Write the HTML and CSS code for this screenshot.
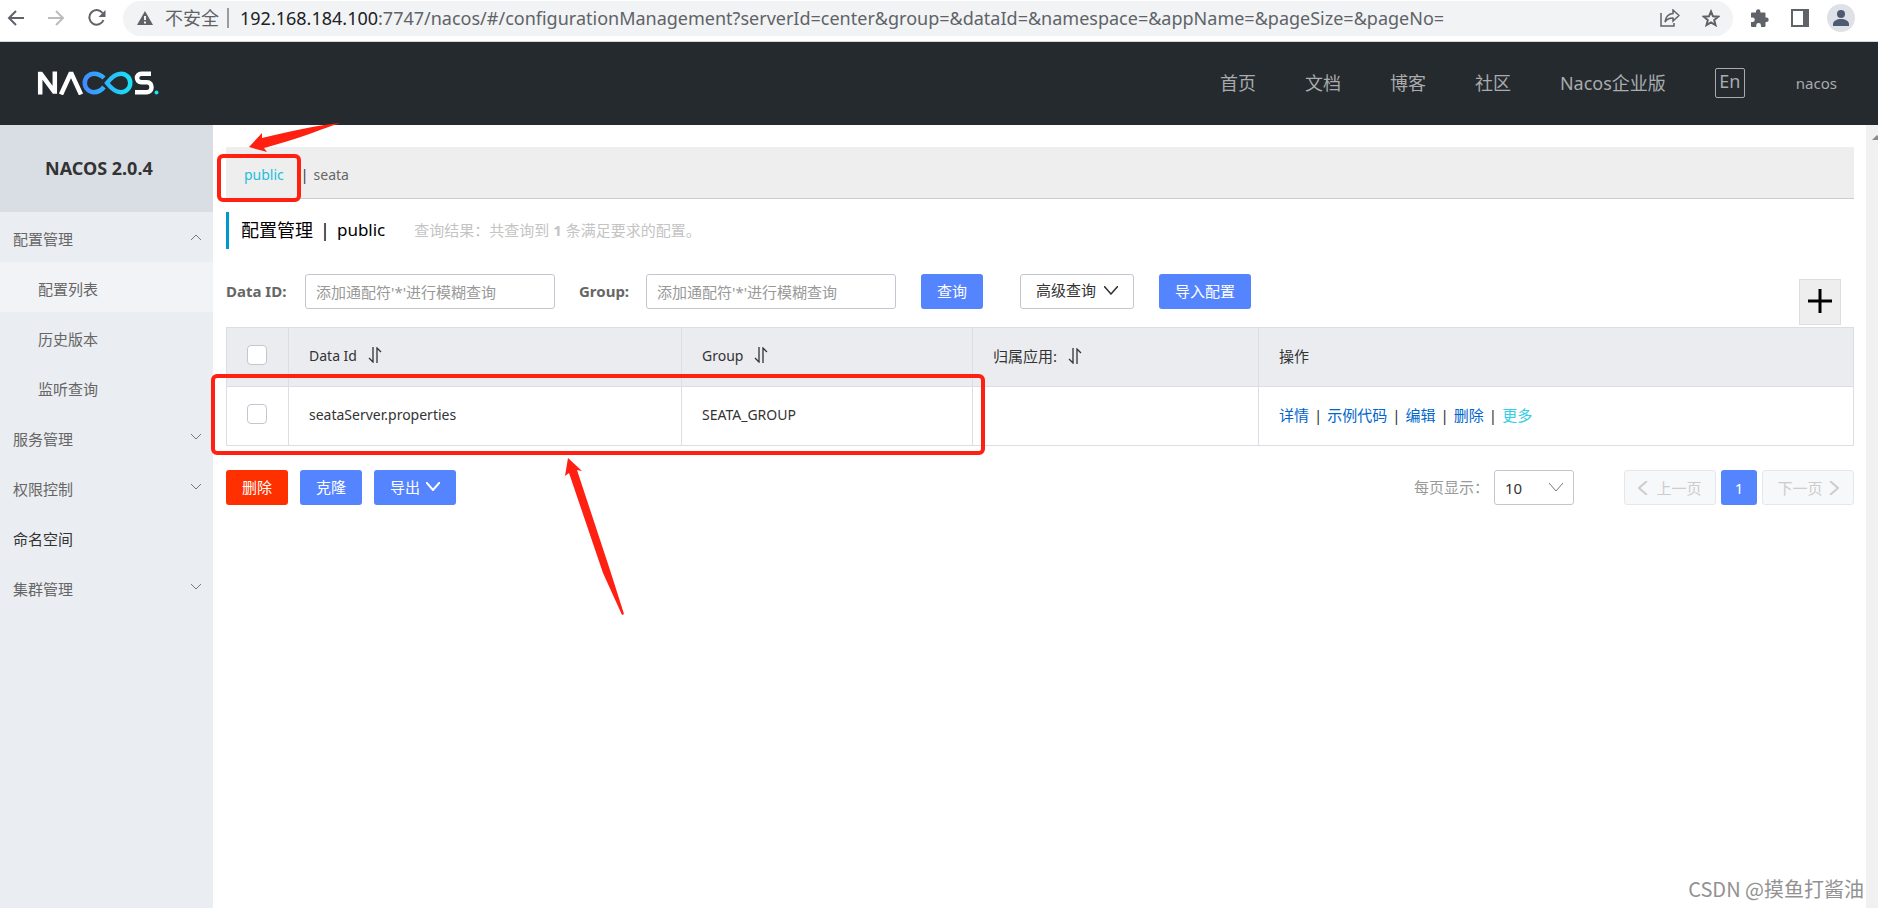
FILE: index.html
```html
<!DOCTYPE html>
<html lang="zh-CN">
<head>
<meta charset="utf-8">
<title>Nacos</title>
<link rel="stylesheet" href="styles.css">
</head>
<body>
<div class="browser-bar">
  <button class="icon-btn" aria-label="后退"><svg width="18" height="18" viewBox="0 0 18 18" fill="none" stroke="#5f6368" stroke-width="2"><path d="M17 9H2M9 2L2 9l7 7"/></svg></button>
  <button class="icon-btn" aria-label="前进"><svg width="18" height="18" viewBox="0 0 18 18" fill="none" stroke="#babcbe" stroke-width="2"><path d="M1 9h15M9 2l7 7-7 7"/></svg></button>
  <button class="icon-btn" aria-label="刷新"><svg width="20" height="18" viewBox="0 0 20 18" fill="none" stroke="#5f6368" stroke-width="2"><path d="M15.500 4A7.300 7.300 0 1 0 16.500 11"/><path d="M18.500 1v7h-7z" fill="#5f6368" stroke="none"/></svg></button>
  <div class="omnibox">
    <svg class="warn" width="16" height="14" viewBox="0 0 16 14"><path d="M8 0l8 14H0z" fill="#5f6368"/><path d="M8 5v4M8 10.500v2" stroke="#f1f3f4" stroke-width="2"/></svg>
    <span class="insecure">不安全</span>
    <span class="url"><b>192.168.184.100</b>:7747/nacos/#/configurationManagement?serverId=center&amp;group=&amp;dataId=&amp;namespace=&amp;appName=&amp;pageSize=&amp;pageNo=</span>
    <button class="icon-btn" aria-label="分享"><svg width="20" height="18" viewBox="0 0 20 18" fill="none" stroke="#5f6368" stroke-width="1.500"><path d="M1 4v13h13v-3"/><path d="M13 1l6 5.500-6 5.500V9C9 9 6.500 10.500 5 13c.5-4.500 3-8 8-8.500z"/></svg></button>
    <button class="icon-btn" aria-label="收藏"><svg width="18" height="18" viewBox="0 0 18 18" fill="none" stroke="#5f6368" stroke-width="2"><path d="M9 2.500l2 4.800 5.200.4-4 3.400 1.300 5L9 13.400l-4.500 2.700 1.300-5-4-3.400 5.200-.4z"/></svg></button>
  </div>
  <button class="icon-btn" aria-label="扩展程序"><svg width="18" height="18" viewBox="0 0 18 18" fill="#5f6368"><path d="M0 4.500Q0 3.500 1 3.500H5V2.500a2.200 2.200 0 0 1 4.400 0V3.500H13.500q1 0 1 1V8.500H15.500a2.200 2.200 0 0 1 0 4.400H14.500V17q0 1-1 1H10V16.500a2.400 2.400 0 0 0-4.800 0V18H1q-1 0-1-1V13H1.500a2.300 2.300 0 0 0 0-4.600H0z"/></svg></button>
  <button class="icon-btn" aria-label="侧边栏"><svg width="18" height="18" viewBox="0 0 18 18"><path d="M1 1h16v16H1z" fill="#fff" stroke="#5f6368" stroke-width="2"/><path d="M12 1h5v16h-5z" fill="#5f6368"/></svg></button>
  <button class="icon-btn" aria-label="用户"><svg width="28" height="28" viewBox="0 0 28 28"><circle cx="14" cy="14" r="14" fill="#dee1e6"/><circle cx="14" cy="10" r="4" fill="#4d5b72"/><path d="M6 22v-2c0-3 4-5 8-5s8 2 8 5v2z" fill="#4d5b72"/></svg></button>
</div>

<header class="top">
  <a href="#" aria-label="NACOS"><svg width="122" height="24" viewBox="0 0 122 24" fill="none" stroke-width="4.500">
    <defs><linearGradient id="g" gradientUnits="userSpaceOnUse" x1="45" y1="0" x2="94" y2="0"><stop offset="0" stop-color="#4288ff"/><stop offset="1" stop-color="#18e2f5"/></linearGradient></defs>
    <path d="M3.200 23.500V3h.8L17 20.500h.8V.5" stroke="#fff"/>
    <path d="M24 23.500L33.400 3h1.200L44 23.500" stroke="#fff"/>
    <path d="M67 7C64 4 61 2.700 57 2.700a9.200 9.200 0 0 0 0 18.500c4 0 7-1.500 10-5.200" stroke="url(#g)"/>
    <path d="M70 12C75 5.500 79 2.700 84 2.700a9.200 9.200 0 0 1 0 18.500C79 21.200 75 18.500 70 12z" stroke="url(#g)"/>
    <path d="M114 2.700H104.500c-6 0-6 8.500 0 8.500h5.500c6 0 6 10 0 10H98" stroke="#fff"/>
    <circle cx="119.500" cy="21.500" r="2" fill="#18e2f5"/>
  </svg></a>
  <nav class="top-nav">
    <a href="#">首页</a><a href="#">文档</a><a href="#">博客</a><a href="#">社区</a><a href="#">Nacos企业版</a>
    <button class="lang">En</button>
    <a href="#" class="user">nacos</a>
  </nav>
</header>

<div class="body">
  <aside class="side">
    <h1>NACOS 2.0.4</h1>
    <a class="item" href="#">配置管理<svg width="10" height="6" viewBox="0 0 10 6"><path d="M0 6l5-5 5 5"/></svg></a>
    <a class="item sub active" href="#">配置列表</a>
    <a class="item sub" href="#">历史版本</a>
    <a class="item sub" href="#">监听查询</a>
    <a class="item" href="#">服务管理<svg width="10" height="6" viewBox="0 0 10 6"><path d="M0 0l5 5 5-5"/></svg></a>
    <a class="item" href="#">权限控制<svg width="10" height="6" viewBox="0 0 10 6"><path d="M0 0l5 5 5-5"/></svg></a>
    <a class="item dark" href="#">命名空间</a>
    <a class="item" href="#">集群管理<svg width="10" height="6" viewBox="0 0 10 6"><path d="M0 0l5 5 5-5"/></svg></a>
  </aside>

  <main class="main">
    <div class="ns"><a class="on" href="#">public</a><span>|</span><a href="#">seata</a></div>
    <div class="title"><h2>配置管理</h2><span>|</span><span class="name">public</span><p>查询结果：共查询到 <b>1</b> 条满足要求的配置。</p></div>

    <form class="search">
      <label for="did">Data ID:</label>
      <input class="box" id="did" type="text" placeholder="添加通配符'*'进行模糊查询">
      <label for="grp" class="grp">Group:</label>
      <input class="box" id="grp" type="text" placeholder="添加通配符'*'进行模糊查询">
      <button type="button" class="btn blue query">查询</button>
      <button type="button" class="btn plain adv">高级查询<svg width="14" height="9" viewBox="0 0 14 9"><path d="M0 0l7 8 7-8"/></svg></button>
      <button type="button" class="btn blue query">导入配置</button>
      <button type="button" class="add" aria-label="新建配置"><svg width="26" height="26" viewBox="0 0 26 26" stroke="#000" stroke-width="3"><path d="M13 1v24M1 13h24"/></svg></button>
    </form>

    <table class="grid">
      <colgroup><col class="c1"><col class="c2"><col class="c3"><col class="c4"><col></colgroup>
      <thead><tr>
        <th class="ck"><input type="checkbox" aria-label="全选"></th>
        <th class="en">Data Id<svg class="sort" width="14" height="16" viewBox="0 0 14 16"><path d="M5 0v15L1 11M9 16V1l4 4"/></svg></th>
        <th class="en">Group<svg class="sort" width="14" height="16" viewBox="0 0 14 16"><path d="M5 0v15L1 11M9 16V1l4 4"/></svg></th>
        <th>归属应用:<svg class="sort" width="14" height="16" viewBox="0 0 14 16"><path d="M5 0v15L1 11M9 16V1l4 4"/></svg></th>
        <th>操作</th>
      </tr></thead>
      <tbody><tr>
        <td class="ck"><input type="checkbox" aria-label="选择 seataServer.properties"></td>
        <td class="en">seataServer.properties</td>
        <td class="en">SEATA_GROUP</td>
        <td></td>
        <td><div class="ops"><a href="#">详情</a><span>|</span><a href="#">示例代码</a><span>|</span><a href="#">编辑</a><span>|</span><a href="#">删除</a><span>|</span><a href="#" class="more">更多</a></div></td>
      </tr></tbody>
    </table>

    <div class="foot">
      <button class="btn red">删除</button>
      <button class="btn blue">克隆</button>
      <button class="btn blue">导出<svg width="14" height="9" viewBox="0 0 14 9"><path d="M0 0l7 8 7-8"/></svg></button>
      <div class="pager">
        <label for="size">每页显示：</label>
        <select id="size"><option>10</option></select>
        <button class="btn page prev" disabled><svg width="10" height="14" viewBox="0 0 10 14"><path d="M9 0L1 7l8 7"/></svg>上一页</button>
        <button class="btn blue num">1</button>
        <button class="btn page" disabled>下一页<svg width="10" height="14" viewBox="0 0 10 14"><path d="M1 0l8 7-8 7"/></svg></button>
      </div>
    </div>
  </main>
  <div class="scroll"><svg width="10" height="5" viewBox="0 0 10 5"><path d="M5 0l5 5H0z" fill="#8b8b8b"/></svg></div>
</div>

<svg class="marks" width="1000" height="640" viewBox="0 0 1000 640" fill="#ff2012">
  <g fill="none" stroke="#ff2012" stroke-width="4"><rect x="219" y="156" width="80" height="44" rx="4"/><rect x="213" y="376" width="770" height="77" rx="4"/></g>
  <path d="M340 123Q316 125 262 138v-5l-13 14 18 5-3-4Q300 138 320 130 334 125 340 123z"/>
  <path d="M568 458l14 13-5-1L610 570 624 614 622 615 603 573 569 473l-4 3z"/>
</svg>
<div class="watermark">CSDN @摸鱼打酱油</div>
</body>
</html>
```
FILE: styles.css
```css
* { box-sizing: border-box; }
body {
  margin: 0; min-height: 100vh; display: flex; flex-direction: column;
  position: relative; overflow: hidden; background: #fff; color: #333;
  font: 15px/20px "Noto Sans", "Noto Sans CJK SC", sans-serif;
}
a { color: inherit; text-decoration: none; }
button, input, select { font: inherit; color: inherit; margin: 0; }
svg { display: block; flex: none; }
h1, h2, p { margin: 0; }

.browser-bar { height: 42px; padding: 0 23px 5px 7px; display: flex; align-items: center; border-bottom: 1px solid #d5d7d9; }
.icon-btn { border: 0; padding: 0; background: none; display: flex; }
.browser-bar > .icon-btn { margin-right: 22px; }
.browser-bar > .icon-btn:last-child { margin-right: 0; margin-left: -4px; }
.omnibox { flex: 1; min-width: 0; height: 35px; margin-right: 18px; margin-left: -6px; padding: 0 13px 0 14px; border-radius: 18px; background: #f1f3f4; display: flex; align-items: center; color: #5f6368; font-size: 18px; line-height: 24px; }
.insecure { margin-left: 12px; padding-right: 8px; border-right: 2px solid #9a9da0; line-height: 20px; white-space: nowrap; }
.url { flex: 1; min-width: 0; margin-left: 11px; white-space: nowrap; overflow: hidden; }
.url b { font-weight: 400; color: #202124; }
.omnibox .icon-btn + .icon-btn { margin-left: 22px; }

.top { height: 83px; padding: 0 41px 2px 37px; background: #252a2f; display: flex; align-items: center; justify-content: space-between; }
.top-nav { display: flex; align-items: center; color: #a9abad; font-size: 18px; }
.top-nav a + a { margin-left: 49px; }
.lang { width: 30px; height: 30px; margin-left: 49px; margin-right: 51px; padding: 0 0 3px; border: 1px solid #a9abad; border-radius: 2px; background: none; line-height: 24px; }
.top-nav .user { font-size: 15px; }

.body { flex: 1; display: flex; }
.side { width: 213px; background: #eaedf1; color: #666; }
.side h1 { height: 87px; padding-left: 45px; background: #d9dde4; color: #333; font-size: 18px; line-height: 86px; }
.item { height: 50px; padding: 3px 12px 0 13px; display: flex; align-items: center; justify-content: space-between; }
.item svg { fill: none; stroke: #777; margin-bottom: 4px; }
.sub { padding-left: 38px; }
.active { background: #f2f3f7; }
.dark { color: #333; }

.main { flex: 1; min-width: 0; padding: 22px 12px 0 13px; }
.ns { height: 52px; padding: 4px 18px 0; background: #eee; border-bottom: 1px solid #ccc; display: flex; align-items: center; gap: 5px; color: #666; font-size: 14px; }
.ns .on { color: #1bbfdc; margin-right: 12px; }
.ns span { color: #333; }
.title { height: 37px; margin-top: 13px; padding: 0 0 2px 12px; border-left: 3px solid #09c; display: flex; align-items: center; gap: 7px; color: #000; font-size: 18px; }
.title h2 { font-size: 18px; font-weight: 400; }
.title .name { font-size: 17px; }
.title p { margin-left: 22px; color: #c4c4c4; font-size: 15px; }

.search { margin-top: 25px; height: 53px; display: flex; align-items: flex-start; color: #666; }
.search label { line-height: 34px; font-weight: 700; width: 79px; }
.search .grp { width: 67px; margin-left: 24px; }
.box { width: 250px; height: 35px; padding: 0 10px; border: 1px solid #c4c6cf; border-radius: 3px; background: #fff; }
.box::placeholder { color: #999; opacity: 1; }
.btn { height: 35px; padding: 0 16px 2px; border: 0; border-radius: 3px; display: flex; align-items: center; white-space: nowrap; }
.btn svg { fill: none; stroke: currentColor; stroke-width: 2; margin-left: 6px; }
.blue { background: #5584ff; color: #fff; }
.red { background: #ff3000; color: #fff; }
.query { margin-left: 25px; }
.plain { margin-left: 37px; padding: 0 15px 3px; border: 1px solid #c4c6cf; background: #fff; color: #333; }
.plain svg { stroke-width: 1.5; margin-left: 8px; }
.add { width: 42px; height: 46px; margin: 5px 13px 0 auto; padding: 0 0 2px; border: 1px solid #ddd; background: #eee; display: flex; align-items: center; justify-content: center; }

.grid { width: 100%; table-layout: fixed; border-collapse: collapse; }
.c1 { width: 62px; } .c2 { width: 393px; } .c3 { width: 291px; } .c4 { width: 286px; }
.grid th, .grid td { height: 59px; padding: 0 20px 2px; border: 1px solid #dcdee3; text-align: left; font-weight: 400; }
.grid th { background: #ebecf0; }
.grid .en { font-size: 14px; }
.grid .ck { padding-bottom: 4px; }
.grid .ck input { appearance: none; display: block; width: 20px; height: 20px; margin: 0; border: 1px solid #c4c6cf; border-radius: 4px; background: #fff; }
.sort { display: inline-block; vertical-align: -2px; margin-left: 11px; fill: none; stroke: #333; stroke-width: 1.3; }
.ops { display: flex; gap: 5px; color: #333; }
.ops a { color: #06c; }
.ops .more { color: #33cde5; }

.foot { margin-top: 24px; display: flex; align-items: center; gap: 12px; }
.pager { margin-left: auto; display: flex; align-items: center; gap: 5px; color: #999; }
.pager label { padding-bottom: 2px; }
.pager select { width: 80px; height: 35px; padding: 0 10px; appearance: none; border: 1px solid #c4c6cf; border-radius: 3px; color: #333; background: #fff url("data:image/svg+xml,%3Csvg xmlns='http://www.w3.org/2000/svg' width='14' height='9' fill='none' stroke='%23777'%3E%3Cpath d='M0 0l7 8 7-8'/%3E%3C/svg%3E") no-repeat right 10px center; }
.page { width: 92px; justify-content: center; border: 1px solid #e6e7eb; background: #f7f8fa; color: #ccc; padding: 0; }
.prev { margin-left: 45px; }
.prev svg { margin: 0 8px 0 0; }
.num { width: 36px; justify-content: center; padding: 0; }

.scroll { width: 12px; background: #f1f1f1; padding: 10px 0 0 6px; overflow: hidden; }
.marks { position: absolute; left: 0; top: 0; pointer-events: none; }
.watermark { position: absolute; right: 14px; bottom: 7px; color: #929292; font: 20px/24px "Noto Sans CJK SC", sans-serif; }
```
